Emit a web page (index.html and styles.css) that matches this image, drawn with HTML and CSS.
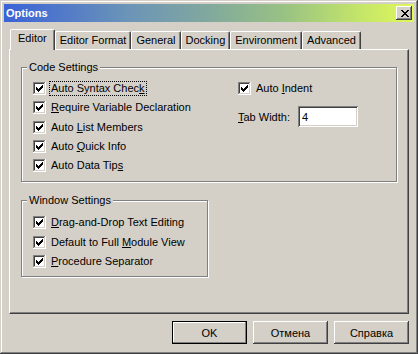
FILE: index.html
```html
<!DOCTYPE html>
<html lang="en">
  <head>
    <meta charset="UTF-8" />
    <title>Options</title>
    <link rel="stylesheet" href="styles.css">
  </head>
  <body>
    <svg class="defs" width="0" height="0">
      <symbol id="chk" viewBox="0 0 13 13">
        <rect width="13" height="13" fill="#fff" />
        <path d="M0 0h12v1H1v11H0z" fill="#808080" />
        <path d="M1 1h10v1H2v9H1z" fill="#404040" />
        <path d="M11 1h1v11H1v-1h10z" fill="#d4d0c8" />
        <path d="M3 5h1v3H3zM4 6h1v3H4zM5 7h1v3H5zM6 6h1v3H6zM7 5h1v3H7zM8 4h1v3H8zM9 3h1v3H9z" fill="#000" />
      </symbol>
    </svg>

    <div class="window">
      <div class="titlebar">
        <span class="title">Options</span>
        <button class="close">
          <svg width="8" height="7" viewBox="0 0 8 7" shape-rendering="crispEdges">
            <path d="M0 0h2v1H0zM6 0h2v1H6zM1 1h2v1H1zM5 1h2v1H5zM2 2h4v1H2zM3 3h2v1H3zM2 4h4v1H2zM1 5h2v1H1zM5 5h2v1H5zM0 6h2v1H0zM6 6h2v1H6z" fill="#000" />
          </svg>
        </button>
      </div>

      <div class="dialog">
        <div class="tabs">
          <div class="tab active">Editor</div>
          <div class="tab">Editor Format</div>
          <div class="tab">General</div>
          <div class="tab">Docking</div>
          <div class="tab">Environment</div>
          <div class="tab">Advanced</div>
        </div>

        <div class="panel">
          <fieldset class="group code-group">
            <legend>Code Settings</legend>
            <div class="cols">
              <div class="col">
                <div class="check"><svg class="box"><use href="#chk" /></svg><span class="lbl focus">Auto Syntax Chec<u>k</u></span></div>
                <div class="check"><svg class="box"><use href="#chk" /></svg><span class="lbl"><u>R</u>equire Variable Declaration</span></div>
                <div class="check"><svg class="box"><use href="#chk" /></svg><span class="lbl">Auto <u>L</u>ist Members</span></div>
                <div class="check"><svg class="box"><use href="#chk" /></svg><span class="lbl">Auto <u>Q</u>uick Info</span></div>
                <div class="check"><svg class="box"><use href="#chk" /></svg><span class="lbl">Auto Data Tip<u>s</u></span></div>
              </div>
              <div class="col">
                <div class="check"><svg class="box"><use href="#chk" /></svg><span class="lbl">Auto <u>I</u>ndent</span></div>
                <div class="field">
                  <label class="field-lbl"><u>T</u>ab Width:</label>
                  <input class="text" type="text" value="4" />
                </div>
              </div>
            </div>
          </fieldset>

          <fieldset class="group window-group">
            <legend>Window Settings</legend>
            <div class="check"><svg class="box"><use href="#chk" /></svg><span class="lbl"><u>D</u>rag-and-Drop Text Editing</span></div>
            <div class="check"><svg class="box"><use href="#chk" /></svg><span class="lbl">Default to Full <u>M</u>odule View</span></div>
            <div class="check"><svg class="box"><use href="#chk" /></svg><span class="lbl"><u>P</u>rocedure Separator</span></div>
          </fieldset>
        </div>

        <div class="buttons">
          <button class="btn default">OK</button>
          <button class="btn">Отмена</button>
          <button class="btn">Справка</button>
        </div>
      </div>
    </div>
  </body>
</html>
```

FILE: styles.css
```css
* {
  box-sizing: border-box;
}
body {
  margin: 0;
  background-color: #d4d0c8;
  font-family: "Liberation Sans", Arial, sans-serif;
  font-size: 11px;
  color: #000;
}
.defs {
  display: block;
  width: 0;
  height: 0;
}
.window {
  width: 418px;
  height: 354px;
  padding: 4px;
  display: flex;
  flex-direction: column;
  background-color: #d4d0c8;
  box-shadow: inset -1px -1px #404040, inset 1px 1px #d4d0c8,
    inset -2px -2px #808080, inset 2px 2px #fff;
}
.titlebar {
  height: 18px;
  padding: 0 2px;
  display: flex;
  align-items: center;
  justify-content: space-between;
  background: linear-gradient(to right, #3a62d8 0%, #6b94b8 30%, #7fa6a0 48%, #98c184 68%, #c2e46a 86%, #e0f85a 100%);
}
.title {
  color: #fff;
  font-weight: bold;
  font-size: 11px;
}
.close {
  width: 16px;
  height: 14px;
  padding: 0 0 0 1px;
  border: 0;
  display: flex;
  align-items: center;
  justify-content: center;
  background-color: #d4d0c8;
  box-shadow: inset -1px -1px #404040, inset 1px 1px #fff,
    inset -2px -2px #808080, inset 2px 2px #d4d0c8;
}
.close svg {
  display: block;
}
.dialog {
  flex: 1;
  display: flex;
  flex-direction: column;
  padding: 7px 5px 6px;
}

/* tabs */
.tabs {
  height: 21px;
  margin-bottom: -1px;
  padding-left: 1px;
  display: flex;
  align-items: flex-end;
  position: relative;
  z-index: 1;
}
.tab {
  height: 18px;
  margin-bottom: 1px;
  padding: 0 4px;
  line-height: 17px;
  white-space: nowrap;
  background-color: #d4d0c8;
  border: 1px solid #fff;
  border-right-color: #404040;
  border-bottom: 0;
  border-radius: 2px 2px 0 0;
  box-shadow: inset -1px 0 #808080;
}
.tab.active {
  height: 21px;
  margin-bottom: 0;
  padding: 0 7px 3px;
}

/* panel */
.panel {
  flex: 1;
  padding: 11px;
  border: 1px solid #fff;
  border-right-color: #404040;
  border-bottom-color: #404040;
  box-shadow: inset -1px -1px #808080;
}
.group {
  margin: 0;
  padding: 5px 11px 6px;
  border: 1px solid #808080;
  box-shadow: inset 1px 1px #fff, 1px 1px #fff;
}
.group legend {
  margin-left: -6px;
  padding: 0 2px;
  line-height: 13px;
  background-color: #d4d0c8;
}
.code-group {
  width: 376px;
}
.window-group {
  width: 187px;
  margin-top: 12px;
  padding-top: 6px;
  padding-bottom: 5px;
}
.cols {
  display: grid;
  grid-template-columns: 205px 1fr;
}
.check {
  height: 19.25px;
  display: flex;
  align-items: center;
  gap: 4px;
}
.box {
  width: 13px;
  height: 13px;
  flex: none;
}
.lbl {
  padding: 0 1px;
  line-height: 13px;
  white-space: nowrap;
}
.lbl.focus {
  outline: 1px dotted #000;
  outline-offset: 0;
}
.field {
  margin-top: 8px;
  display: flex;
  align-items: center;
}
.field-lbl {
  width: 60px;
}
.text {
  width: 60px;
  height: 21px;
  padding: 0 4px;
  border: 0;
  outline: none;
  font-family: inherit;
  font-size: 11px;
  background-color: #fff;
  box-shadow: inset 1px 1px #808080, inset -1px -1px #fff,
    inset 2px 2px #404040, inset -2px -2px #d4d0c8;
}

/* buttons */
.buttons {
  margin-top: 7px;
  display: flex;
  justify-content: flex-end;
  gap: 6px;
}
.btn {
  width: 75px;
  height: 23px;
  padding: 0;
  border: 0;
  font-family: inherit;
  font-size: 11px;
  color: #000;
  background-color: #d4d0c8;
  box-shadow: inset -1px -1px #404040, inset 1px 1px #fff,
    inset -2px -2px #808080, inset 2px 2px #d4d0c8;
}
.btn.default {
  border: 1px solid #000;
  box-shadow: inset -1px -1px #808080, inset 1px 1px #fff;
}
```
